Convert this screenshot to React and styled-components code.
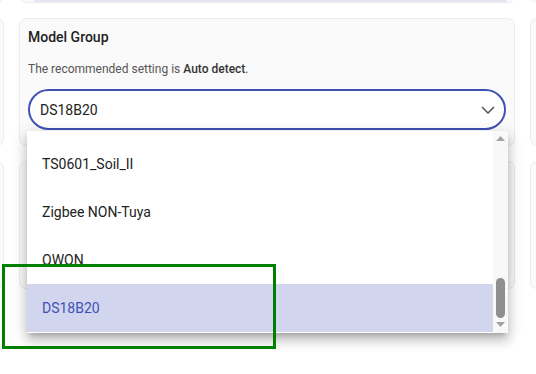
import styled, { createGlobalStyle } from 'styled-components';

const GlobalStyle = createGlobalStyle`
  html, body {
    margin: 0;
    padding: 0;
    background: #ffffff;
  }
  body {
    font-family: Roboto, "Liberation Sans", sans-serif;
    color: #212121;
  }
`;

const Page = styled.div`
  position: relative;
  width: 536px;
  height: 374px;
  overflow: hidden;
  background: #ffffff;
`;

const CardGrid = styled.div`
  display: grid;
  grid-template-columns: 200px 496px 200px;
  grid-auto-rows: 128px;
  gap: 15px;
  margin: -125px 0 0 -196px;
`;

const Card = styled.div`
  position: relative;
  box-sizing: border-box;
  background: #fafafa;
  border: 1px solid #ececec;
  border-radius: 7px;
  padding: 8px 8px 8px;
  display: flex;
  flex-direction: column;
  justify-content: ${({ $bottom }) => ($bottom ? 'flex-end' : 'flex-start')};
`;

const Strip = styled.div`
  height: 2px;
  margin: 0 -1px -8px 6px;
  background: #e6e6f3;
`;

const Title = styled.h3`
  margin: 0;
  font-size: 14px;
  line-height: 20px;
  font-weight: 500;
  color: #212121;
`;

const Hint = styled.p`
  margin: 14px 0 0;
  font-size: 12px;
  line-height: 16px;
  color: #555555;

  b {
    font-weight: 500;
    color: #333333;
  }
`;

const SelectBox = styled.div`
  box-sizing: border-box;
  margin-top: 12px;
  height: 41px;
  border: 2px solid #3f51b5;
  border-radius: 21px;
  background: #ffffff;
  display: flex;
  align-items: center;
  justify-content: space-between;
  padding: 0 9px 0 10px;
  font-size: 14px;
  color: #222222;
`;

const Menu = styled.div`
  position: absolute;
  left: 7px;
  top: 112px;
  width: 481px;
  height: 202px;
  background: #ffffff;
  display: flex;
  z-index: 2;
  box-shadow: 0 5px 5px -3px rgba(0, 0, 0, 0.2), 0 8px 10px 1px rgba(0, 0, 0, 0.14),
    0 3px 14px 2px rgba(0, 0, 0, 0.12);
`;

const OptionList = styled.ul`
  flex: 1;
  list-style: none;
  margin: 0;
  padding: ${({ $scrollRest }) => $scrollRest}px 0 0;
  overflow: hidden;
`;

const Option = styled.li`
  height: 48px;
  display: flex;
  align-items: center;
  padding-left: 15px;
  font-size: 14px;
  color: ${({ $selected }) => ($selected ? '#3f51b5' : '#222222')};
  background: ${({ $selected }) => ($selected ? '#d1d5ed' : 'transparent')};
`;

const ScrollBar = styled.div`
  width: 15px;
  background: #f8f8f8;
  display: flex;
  flex-direction: column;
  align-items: center;
  padding: 5px 0 6px;
  box-sizing: border-box;
`;

const Thumb = styled.div`
  width: 9px;
  height: 40px;
  border-radius: 5px;
  background: #8f8f8f;
  margin: auto 0 4px;
`;

const Marker = styled.div`
  position: absolute;
  left: 2px;
  top: 264px;
  width: 274px;
  height: 85px;
  box-sizing: border-box;
  border: 3px solid #008000;
  z-index: 3;
`;

const Chevron = () => (
  <svg width="14" height="8" viewBox="0 0 14 8">
    <polyline points="1,1 7,7 13,1" fill="none" stroke="#5a5a5a" strokeWidth="1.6" />
  </svg>
);

const Arrow = ({ down }) => (
  <svg width="9" height="5" viewBox="0 0 9 5">
    <polygon points={down ? '0,0 9,0 4.5,5' : '0,5 9,5 4.5,0'} fill="#a3a3a3" />
  </svg>
);

const options = ['TS0601_Soil_II', 'Zigbee NON-Tuya', 'OWON', 'DS18B20'];

const App = () => (
  <Page>
    <GlobalStyle />
    <CardGrid>
      <Card />
      <Card $bottom>
        <Strip />
      </Card>
      <Card />

      <Card />
      <Card>
        <Title>Model Group</Title>
        <Hint>
          The recommended setting is <b>Auto detect</b>.
        </Hint>
        <SelectBox>
          <span>DS18B20</span>
          <Chevron />
        </SelectBox>
        <Menu>
          <OptionList $scrollRest={9}>
            {options.map((o) => (
              <Option key={o} $selected={o === 'DS18B20'}>
                {o}
              </Option>
            ))}
          </OptionList>
          <ScrollBar>
            <Arrow />
            <Thumb />
            <Arrow down />
          </ScrollBar>
        </Menu>
      </Card>
      <Card />

      <Card />
      <Card />
      <Card />
    </CardGrid>
    <Marker />
  </Page>
);

export default App;
